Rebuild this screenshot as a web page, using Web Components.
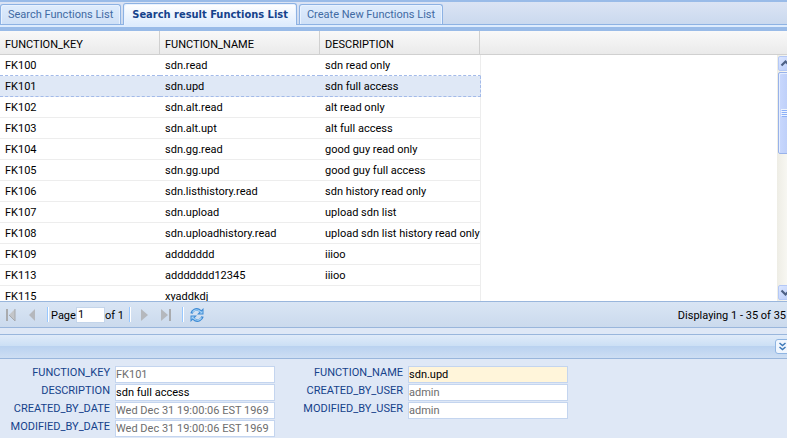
<!DOCTYPE html>
<html lang="en">
<head>
<meta charset="utf-8">
<title>Functions List</title>
<style>
html, body { height: 100%; margin: 0; }
body { font: 11px/14px Roboto, "DejaVu Sans Condensed", sans-serif; color: #000; background: #dfe8f6; overflow: hidden; }
</style>
</head>
<body>
<functions-page></functions-page>

<script>
const define = (name, html, setup) => {
  const template = document.createElement('template');
  template.innerHTML = html;
  customElements.define(name, class extends HTMLElement {
    connectedCallback() {
      if (this.shadowRoot) return;
      const root = this.attachShadow({ mode: 'open' });
      root.append(template.content.cloneNode(true));
      if (setup) setup(this, root);
    }
  });
};

define('tab-button', `
<style>
:host { display: flex; }
button { font: inherit; color: #416aa3; background: linear-gradient(#deecfd, #cfe0f6); border: 1px solid #8db2e3;
  border-bottom: 0; border-radius: 3px 3px 0 0; padding: 0 7px; margin: 0; white-space: nowrap; height: 20px;
  box-shadow: inset 1px 1px #e8f2ff, inset -1px 0 #e8f2ff; }
:host([active]) button { font-family: "DejaVu Sans Condensed", sans-serif; font-weight: bold; color: #15428b; padding: 0 8px;
  background: linear-gradient(#fff, #deecfd); height: 22px; }
:host([active]) { margin-bottom: -1px; }
</style>
<button type="button" role="tab"><slot></slot></button>`,
(host, root) => root.querySelector('button').setAttribute('aria-selected', host.hasAttribute('active')));

define('tab-strip', `
<style>
:host { display: block; background: #deecfd; border-top: 2px solid #99bbe8; border-bottom: 4px solid #99bbe8; padding-bottom: 2px; }
nav { display: flex; align-items: end; gap: 2px; height: 22px; border-bottom: 1px solid #8db2e3; background: linear-gradient(#dbe4f4, #cad9ee); }
</style>
<nav role="tablist"><slot></slot></nav>`);

define('data-grid', `
<style>
:host { display: grid; grid-template-columns: minmax(0, 1fr) auto; overflow: hidden; min-height: 0;
  background: linear-gradient(#f9f9f9, #eaeaea) top / 100% 23px no-repeat, linear-gradient(#d0d0d0, #d0d0d0) top / 100% 24px no-repeat, #fff; }
.rows { min-height: 0; overflow: hidden; }
table { border-collapse: separate; border-spacing: 0; table-layout: fixed; width: 481px; }
th, td { box-sizing: border-box; padding: 2px 0 0 5px; text-align: left; font-weight: normal; white-space: nowrap; }
th { height: 24px; border-right: 1px solid #d0d0d0; border-bottom: 1px solid #d0d0d0; padding-top: 4px; }
td { height: 21px; border-bottom: 1px solid #ededed; }
td:last-child { border-right: 1px solid #ededed; }
th + th, td + td { padding-left: 5px; }
th:last-child { border-right: 0; }
th:last-child { background: linear-gradient(#d0d0d0, #d0d0d0) right 1px top / 1px 100% no-repeat; }
tr.next-selected td { border-bottom: 1px dashed #a3bae9; }
tr.selected td { background: #dfe8f6; border-bottom: 1px dashed #a3bae9; }
tr.selected td:last-child { border-right: 1px dashed #a3bae9; }
</style>
<div class="rows"><table><colgroup><col style="width:160px"><col style="width:160px"><col></colgroup><thead></thead><tbody></tbody></table></div>
<slot name="scroll"></slot>`,
(host, root) => {
  const columns = ['FUNCTION_KEY', 'FUNCTION_NAME', 'DESCRIPTION'];
  const rows = [
    ['FK100', 'sdn.read', 'sdn read only'],
    ['FK101', 'sdn.upd', 'sdn full access'],
    ['FK102', 'sdn.alt.read', 'alt read only'],
    ['FK103', 'sdn.alt.upt', 'alt full access'],
    ['FK104', 'sdn.gg.read', 'good guy read only'],
    ['FK105', 'sdn.gg.upd', 'good guy full access'],
    ['FK106', 'sdn.listhistory.read', 'sdn history read only'],
    ['FK107', 'sdn.upload', 'upload sdn list'],
    ['FK108', 'sdn.uploadhistory.read', 'upload sdn list history read only'],
    ['FK109', 'addddddd', 'iiioo'],
    ['FK113', 'addddddd12345', 'iiioo'],
    ['FK115', 'xyaddkdj', '']
  ];
  root.querySelector('thead').innerHTML = '<tr>' + columns.map(c => `<th scope="col">${c}</th>`).join('') + '</tr>';
  root.querySelector('tbody').innerHTML = rows.map((r, i) =>
    `<tr class="${['next-selected', 'selected'][i] || ''}">` + r.map(c => `<td>${c}</td>`).join('') + '</tr>').join('');
});

define('scroll-rail', `
<style>
:host { display: flex; flex-direction: column; width: 10px; margin-top: 24px; overflow: hidden; min-height: 0; }
.rail { flex: 1; display: flex; flex-direction: column; width: 17px; background: linear-gradient(90deg, #eeede5, #fefefb); padding: 1px 0; box-sizing: border-box; }
button { flex: none; box-sizing: border-box; width: 15px; height: 15px; margin: 0 1px; padding: 0; border: 1px solid #b4c8f6; border-radius: 2px;
  background: linear-gradient(135deg, #dbe6ff, #b6caf9); display: flex; align-items: center; justify-content: center; }
.thumb { flex: none; box-sizing: border-box; width: 15px; height: 82px; margin: 1px 1px 0; border: 1px solid #98b2ea; border-radius: 2px;
  background: linear-gradient(90deg, #c9d8fd, #b9cbf7); display: flex; align-items: center; justify-content: center; box-shadow: inset 1px 1px #e6eeff; }
.gap { flex: 1; }
svg { display: block; }
</style>
<div class="rail">
<button type="button" aria-label="Scroll up"><svg width="11" height="9"><path d="M1.500 6.500L5.500 2.500L9.500 6.500" fill="none" stroke="#4d6185" stroke-width="2.200"/></svg></button>
<div class="thumb"><svg width="9" height="9"><path d="M1 1.500H9M1 3.500H9M1 5.500H9M1 7.500H9" stroke="#8cb0f8"/><path d="M0 .5H8M0 2.500H8M0 4.500H8M0 6.500H8" stroke="#eef4fe"/></svg></div>
<div class="gap"></div>
<button type="button" aria-label="Scroll down"><svg width="11" height="9"><path d="M1.500 2.500L5.500 6.500L9.500 2.500" fill="none" stroke="#4d6185" stroke-width="2.200"/></svg></button>
</div>`);

define('paging-bar', `
<style>
:host { display: flex; align-items: center; height: 25px; padding: 0 1px 0 3px; border-top: 1px solid #99b6dc; border-bottom: 1px solid #99b6dc;
  background: linear-gradient(#d9e5f4, #cbdaed); white-space: nowrap; }
button { border: 0; background: none; padding: 0; width: 16px; height: 16px; display: block; }
svg { display: block; }
.sep { width: 1px; height: 15px; background: #98c8ff; border-right: 1px solid #fff; }
.steps { display: flex; gap: 5px; margin-right: 7px; }
.next { display: flex; gap: 7px; margin: 0 7px 0 5px; }
label { display: flex; align-items: center; margin-left: 2px; }
label span, .of, output { padding-top: 3px; }
input { font: inherit; width: 29px; height: 16px; box-sizing: border-box; border: 1px solid #c4d5ea; padding: 0 1px; margin: 0; background: #fff; }
.of { margin-right: 5px; }
.refresh { margin-left: 5px; }
output { margin-left: auto; }
</style>
<div class="steps">
<button type="button" aria-label="First page" disabled><svg width="16" height="16"><path d="M4 2V14" stroke="#a9abae" stroke-width="2"/><path d="M12 2V14L6 8Z" fill="#c3c5c8"/><path d="M12 2V14L6 8" fill="none" stroke="#a5a8ad"/></svg></button>
<button type="button" aria-label="Previous page" disabled><svg width="16" height="16"><path d="M11 2V14L5 8Z" fill="#b5b8bd"/></svg></button>
</div>
<span class="sep"></span>
<label><span>Page</span><input type="text" value="1" aria-label="Page"></label><span class="of">of 1</span>
<span class="sep"></span>
<div class="next">
<button type="button" aria-label="Next page" disabled><svg width="16" height="16"><path d="M5 2V14L12 8Z" fill="#b5b8bd"/></svg></button>
<button type="button" aria-label="Last page" disabled><svg width="16" height="16"><path d="M2 2V14L9 8Z" fill="#b5b8bd"/><path d="M11 2V14" stroke="#a9abae" stroke-width="2"/></svg></button>
</div>
<span class="sep"></span>
<button class="refresh" type="button" aria-label="Refresh"><svg width="16" height="16" viewBox="0 0 16 16">
<g><path d="M2.500 6.500C3.500 3 7 1.500 10 3L12 4.500" fill="none" stroke="#3c8ad4" stroke-width="2.600"/><path d="M14.500 1V7.500H8Z" fill="#3c8ad4"/><path d="M3.500 5.500C4.500 3 7.500 2.300 9.500 3.200L12 5" fill="none" stroke="#a5d2f6" stroke-width="1.200"/><path d="M13.500 3.500V6.500H10.500Z" fill="#a5d2f6"/></g>
<g transform="rotate(180 8 8)"><path d="M2.500 6.500C3.500 3 7 1.500 10 3L12 4.500" fill="none" stroke="#3c8ad4" stroke-width="2.600"/><path d="M14.500 1V7.500H8Z" fill="#3c8ad4"/><path d="M3.500 5.500C4.500 3 7.500 2.300 9.500 3.200L12 5" fill="none" stroke="#a5d2f6" stroke-width="1.200"/><path d="M13.500 3.500V6.500H10.500Z" fill="#a5d2f6"/></g></svg></button>
<output>Displaying 1 - 35 of 35</output>`);

define('panel-header', `
<style>
:host { display: flex; justify-content: end; align-items: center; height: 23px; margin-top: 6px; overflow: hidden;
  border-top: 1px solid #99b6dc; border-bottom: 1px solid #99b6dc; background: linear-gradient(#e0ebf9, #cbdff5 48%, #bad2f0 50%, #cddef3); }
button { flex: none; box-sizing: border-box; width: 15px; height: 15px; margin-right: -3px; padding: 0; border: 1px solid #8fb5e2; border-radius: 3px; background: #f0f6fe; display: flex; align-items: center; justify-content: center; }
svg { display: block; }
</style>
<button type="button" aria-label="Collapse panel"><svg width="9" height="9"><path d="M1.500 1L4.500 3.500L7.500 1M1.500 5L4.500 7.500L7.500 5" fill="none" stroke="#3e79b8" stroke-width="1.500"/></svg></button>`);

define('form-field', `
<style>
:host { display: flex; height: 18px; }
label { width: 110px; text-align: right; color: #15428b; white-space: nowrap; line-height: 14px; }
input { font: inherit; color: #000; box-sizing: border-box; width: 160px; height: 17px; margin: 0 0 0 5px; padding: 0; border: 1px solid #c4d5ef; border-radius: 0; background: #fff; }
input:disabled { color: #6d6d6d; -webkit-text-fill-color: #6d6d6d; }
:host([focused]) input { background: #fff5da; }
</style>
<label for="f"></label><input id="f" type="text">`,
(host, root) => {
  const input = root.querySelector('input');
  root.querySelector('label').textContent = host.getAttribute('label');
  input.value = host.getAttribute('value');
  input.disabled = host.hasAttribute('locked');
});

define('detail-form', `
<style>
:host { display: block; padding: 7px 0 0; }
form { display: flex; gap: 18px; margin: 0; }
</style>
<form>
<div>
<form-field label="FUNCTION_KEY" value="FK101" locked></form-field>
<form-field label="DESCRIPTION" value="sdn full access"></form-field>
<form-field label="CREATED_BY_DATE" value="Wed Dec 31 19:00:06 EST 1969" locked></form-field>
<form-field label="MODIFIED_BY_DATE" value="Wed Dec 31 19:00:06 EST 1969" locked></form-field>
</div>
<div>
<form-field label="FUNCTION_NAME" value="sdn.upd" focused></form-field>
<form-field label="CREATED_BY_USER" value="admin" locked></form-field>
<form-field label="MODIFIED_BY_USER" value="admin" locked></form-field>
</div>
</form>`);

define('functions-page', `
<style>
:host { display: flex; flex-direction: column; height: 100vh; }
data-grid { flex: 1; }
tab-strip, paging-bar, panel-header, detail-form { flex: none; }
</style>
<tab-strip>
<tab-button>Search Functions List</tab-button>
<tab-button active>Search result Functions List</tab-button>
<tab-button>Create New Functions List</tab-button>
</tab-strip>
<data-grid><scroll-rail slot="scroll"></scroll-rail></data-grid>
<paging-bar></paging-bar>
<panel-header></panel-header>
<detail-form></detail-form>`);
</script>
</body>
</html>
